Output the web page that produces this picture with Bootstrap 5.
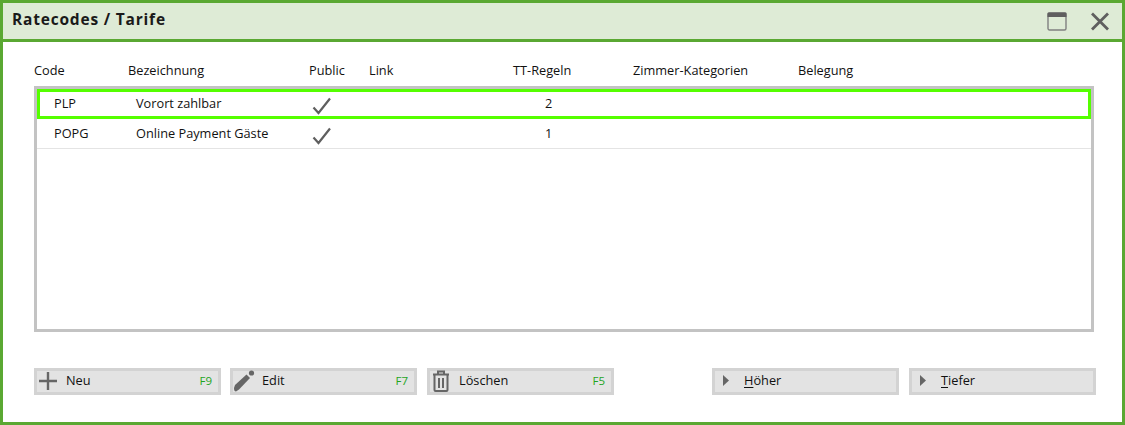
<!DOCTYPE html>
<html lang="de">
<head>
<meta charset="utf-8">
<title>Ratecodes / Tarife</title>
<link href="https://cdn.jsdelivr.net/npm/bootstrap@5.3.0/dist/css/bootstrap.min.css" rel="stylesheet">
<style>
html,body{margin:0;height:425px;overflow:hidden;background:#fff}
body{font-family:"Open Sans",sans-serif;font-size:12.75px;line-height:17px;color:#111}
.win{width:1125px;height:425px;border:3px solid #5aa832;display:flex;flex-direction:column}
.win-title{height:39px;flex:none;background:#deebd6;border-bottom:3px solid #5aa832;padding:0 12px 4px 9px}
.win-title h1{font-family:"Open Sans",sans-serif;font-weight:700;font-size:15.5px;letter-spacing:.8px;margin:0;color:#1a1a1a}
.win-ctl{gap:23px;margin-top:4px}
.win-body{padding:0 26px 0 31px;flex:1;display:flex;flex-direction:column}
.cols{display:grid;grid-template-columns:94px 181px 60px 144px 120px 165px 1fr}
.heads{height:44px;padding-top:20px}
.tbl{width:1060px;height:246px;border:3px solid #c3c3c3}
.tr{display:grid;grid-template-columns:82px 175px 60px 1fr;height:30px;padding-left:17px;align-items:center;border-bottom:1px solid #e4e4e4}
.tr.sel{border:3px solid #55ff00;padding-left:14px;padding-bottom:2px}
.num{padding-left:174px}
.chk{display:block;margin-top:4px;margin-left:1px}
.sel .chk{margin-top:5px;margin-bottom:-1px}
.bar{margin-top:36px;width:1062px}
.b{width:187px;height:27px;border:3px solid #d3d3d3;background:#e3e3e3;border-radius:0;padding:0 6px 2px 0;font-size:12.75px;line-height:17px;color:#111;display:flex;align-items:center;text-align:left}
.b:hover,.b:active{background:#e3e3e3;border-color:#d3d3d3;color:#111}
.ic{width:22px;margin-right:7px;flex:none;display:flex;justify-content:center}
.fk{margin-left:auto;color:#1fa51f;font-size:11.5px}
.b u{text-underline-offset:2px}
.gap1{margin-left:9px}
.gap2{margin-left:10px}
.gap3{margin-left:98px}
.gap4{margin-left:10px}
.btn-ic{background:none;border:0;padding:0;line-height:0}
</style>
</head>
<body>
<div class="win">
  <div class="win-title d-flex align-items-center justify-content-between">
    <h1>Ratecodes / Tarife</h1>
    <div class="d-flex align-items-center win-ctl">
      <button class="btn-ic" aria-label="Maximieren"><svg width="20" height="19" viewBox="0 0 20 19"><rect x="1" y="1" width="18" height="17" rx="1.5" fill="none" stroke="#808080" stroke-width="1.4"/><path d="M.5 1.500q0-1 1-1h17q1 0 1 1V5H.5z" fill="#5f5f5f"/></svg></button>
      <button class="btn-ic" aria-label="Schließen"><svg width="20" height="19" viewBox="0 0 20 19"><path d="M2 1.500l16 16M18 1.500l-16 16" stroke="#5f5f5f" stroke-width="2.800" fill="none"/></svg></button>
    </div>
  </div>
  <div class="win-body">
    <div class="cols heads">
      <span>Code</span><span>Bezeichnung</span><span>Public</span><span>Link</span><span>TT-Regeln</span><span>Zimmer-Kategorien</span><span>Belegung</span>
    </div>
    <div class="tbl">
      <div class="tr sel"><span>PLP</span><span>Vorort zahlbar</span><span><svg class="chk" width="20" height="18" viewBox="0 0 20 18"><path d="M1.500 10.500l5 5.500L18 1.500" fill="none" stroke="#5f5f5f" stroke-width="2.200"/></svg></span><span class="num">2</span></div>
      <div class="tr"><span>POPG</span><span>Online Payment Gäste</span><span><svg class="chk" width="20" height="18" viewBox="0 0 20 18"><path d="M1.500 10.500l5 5.500L18 1.500" fill="none" stroke="#5f5f5f" stroke-width="2.200"/></svg></span><span class="num">1</span></div>
    </div>
    <div class="bar d-flex">
      <button class="btn b"><span class="ic"><svg width="18" height="18" viewBox="0 0 18 18"><path d="M9 0v18M0 9h18" stroke="#666" stroke-width="2.400"/></svg></span><span>Neu</span><span class="fk">F9</span></button>
      <button class="btn b gap1"><span class="ic"><svg width="22" height="22" viewBox="0 0 22 22"><path d="M1 18l1-3L13.500 4.500 17 8 6 19.500l-3 2q-2 0-2-3.500z" fill="#666"/><circle cx="18.500" cy="3" r="2.600" fill="#666"/></svg></span><span>Edit</span><span class="fk">F7</span></button>
      <button class="btn b gap2"><span class="ic"><svg width="18" height="22" viewBox="0 0 18 22"><path d="M1 4.500h16M6 4V1.500h6V4M2.500 5v15q0 1 1 1h11q1 0 1-1V5M7 8v10M11 8v10" fill="none" stroke="#666" stroke-width="2"/></svg></span><span>Löschen</span><span class="fk">F5</span></button>
      <button class="btn b gap3"><span class="ic"><svg width="7" height="11" viewBox="0 0 7 11"><path d="M0 0l6 5.500L0 11z" fill="#666"/></svg></span><span><u>H</u>öher</span></button>
      <button class="btn b gap4"><span class="ic"><svg width="7" height="11" viewBox="0 0 7 11"><path d="M0 0l6 5.500L0 11z" fill="#666"/></svg></span><span><u>T</u>iefer</span></button>
    </div>
  </div>
</div>
<script src="https://cdn.jsdelivr.net/npm/bootstrap@5.3.0/dist/js/bootstrap.bundle.min.js"></script>
</body>
</html>
